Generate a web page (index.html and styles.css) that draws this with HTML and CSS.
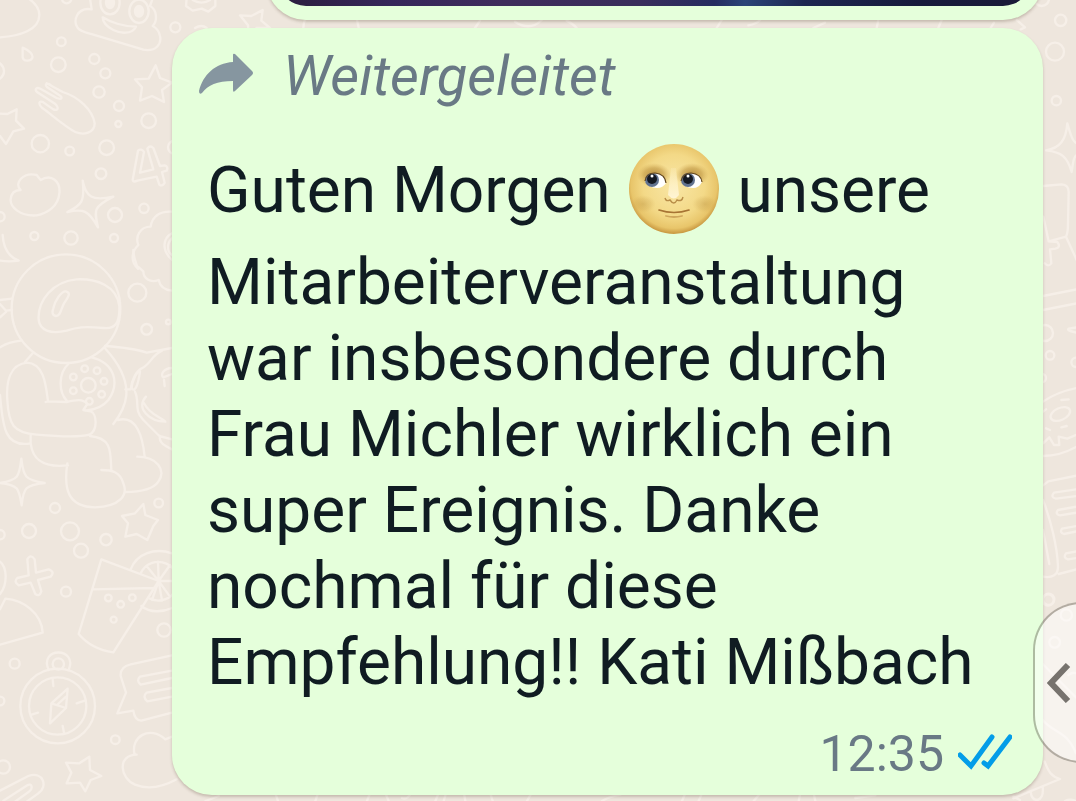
FILE: index.html
```
<!DOCTYPE html>
<html lang="de">
<head>
    <meta charset="UTF-8">
    <meta name="viewport" content="width=device-width, initial-scale=1.0">
    <title>Chat</title>
    <link rel="stylesheet" href="styles.css">
</head>
<body>
    <!-- Wallpaper -->
    <svg class="wallpaper" viewBox="0 0 3228 2403" preserveAspectRatio="xMinYMin slice" aria-hidden="true">
        <g>
            <path d="M0 112C60 108 118 90 118 45C118 20 100 5 85 -5M275 28C230 20 218 65 232 82C240 95 260 98 280 104L430 149C470 156 485 130 480 108C477 92 466 82 458 78C474 62 470 28 450 18L458 -5M275 28L270 -5M308 52C330 66 370 80 408 80C395 105 360 100 340 90C320 80 308 66 308 52Z"/>
            <ellipse cx="330" cy="8" rx="29" ry="35"/><ellipse cx="417" cy="34" rx="29" ry="35"/>
            <ellipse class="fill" cx="330" cy="8" rx="12" ry="16"/><ellipse class="fill" cx="417" cy="34" rx="12" ry="16"/>
            <circle cx="184" cy="125" r="13"/><circle cx="175" cy="194" r="22"/><circle cx="283" cy="177" r="15"/><circle cx="316" cy="220" r="15"/><circle cx="297" cy="276" r="17"/><circle cx="357" cy="318" r="15"/><circle cx="355" cy="372" r="9"/><circle cx="446" cy="362" r="22"/><circle cx="121" cy="431" r="26"/><circle cx="209" cy="453" r="13"/><circle cx="320" cy="443" r="22"/><circle cx="303" cy="521" r="16"/><circle cx="345" cy="645" r="21"/><circle cx="432" cy="625" r="14"/><circle cx="213" cy="714" r="20"/><circle cx="342" cy="714" r="12"/><circle cx="103" cy="708" r="12"/><circle cx="0" cy="650" r="14"/><circle cx="526" cy="82" r="15"/><circle cx="524" cy="442" r="20"/><circle cx="200" cy="-4" r="14"/>
            <path d="M68 143C90 152 100 165 97 174C90 186 70 184 68 172ZM0 190C14 202 18 222 0 236"/>
            <path d="M140 250L188 276C235 290 278 330 284 370C284 400 250 406 226 396C195 380 150 340 128 325C112 310 118 300 130 307L160 328C176 334 176 322 166 312L112 277C100 266 112 260 124 268L170 294C186 300 190 292 176 284L142 262C132 252 140 248 152 255"/>
            <path d="M467 196L480 234L516 248L486 270L492 306L456 288L420 302L426 262L405 238L446 236ZM0 341L22 342L50 328L48 362L72 386L40 394L18 432L0 408"/>
            <path d="M414 452L398 540Q400 548 412 542L470 530L478 554Q488 560 494 548L486 516L500 512Q506 500 494 496L480 498L460 444Q450 434 442 446L460 508L420 518L432 456Q424 444 414 452Z"/>
            <path d="M62 570C40 550 70 515 110 525L122 540C155 520 182 545 178 580C175 620 140 640 110 646C60 650 30 620 32 598C34 576 48 570 62 570ZM248 542C258 590 275 604 340 590C280 620 282 630 294 682C265 630 250 626 202 636C245 615 255 605 248 542ZM8 705C10 745 25 770 56 782C35 785 20 785 0 782"/>
            <path d="M516 635C480 632 456 650 452 680C420 680 405 710 415 735C390 760 395 790 414 806M516 700C488 715 484 750 516 780M516 715C500 730 500 755 516 765"/>
        </g>
        <g transform="translate(0 720)">
            <circle cx="198" cy="206" r="163"/>
            <path d="M116 240C112 180 160 124 230 118C290 116 350 136 358 198C360 250 345 268 310 264C250 258 230 262 200 272C150 284 120 270 116 240ZM160 205C165 180 185 152 198 154C212 158 208 168 192 190C182 208 182 228 168 228C156 226 156 215 160 205ZM0 180L36 176M0 192L18 212L36 210M0 232L18 216M0 322Q25 306 62 302M98 340L75 366"/>
            <path d="M137 486L144 484C138 440 134 370 80 368C30 374 18 425 22 480C26 555 40 578 110 584C180 590 240 592 268 584C295 570 290 520 272 514L250 510L262 492C250 475 225 480 200 486L144 484M0 465C8 550 10 625 92 610L92 584M92 610C98 660 130 684 204 676M202 670C190 750 205 800 285 802C360 800 385 765 370 730C360 695 335 690 304 690M334 690C330 640 340 595 270 588M315 325C420 440 372 510 340 552M354 540C410 525 428 590 434 650M412 650C470 650 500 690 475 725C460 748 420 756 374 756M315 318Q400 324 440 338L516 324M486 332C455 345 450 375 425 385C408 395 395 420 392 448L376 448M205 372C175 400 175 455 200 482M275 352C345 370 360 430 325 480C305 505 280 510 256 512"/>
            <path d="M420 395C410 390 395 430 395 445C406 460 415 430 420 395ZM405 455C420 485 400 510 430 540L478 588L516 598M438 470C405 505 450 545 496 545C480 530 450 525 432 490M480 588C475 610 500 620 516 628M516 384C490 385 480 405 490 412L516 402M494 438L492 420"/>
            <circle cx="265" cy="436" r="22"/><circle cx="254" cy="386" r="10"/><circle cx="291" cy="392" r="10"/><circle cx="312" cy="424" r="10"/><circle cx="305" cy="463" r="10"/><circle cx="268" cy="484" r="10"/><circle cx="220" cy="452" r="10"/><circle cx="220" cy="411" r="10"/><circle cx="412" cy="158" r="27"/><circle cx="440" cy="268" r="16"/><circle cx="505" cy="246" r="7"/><circle cx="165" cy="804" r="15"/><circle cx="476" cy="789" r="13"/>
            <path d="M64 656C70 710 75 720 134 729C75 735 70 745 65 796C57 745 55 735 0 729C55 720 58 710 64 656ZM414 86C404 60 400 35 400 30M414 80L430 94C430 115 450 130 476 120C480 140 495 150 516 152M366 828L405 820L430 792L436 825L474 840L460 858L442 900L410 882L376 890L384 850Z"/>
        </g>
        <g transform="translate(0 1560)">
            <circle cx="0" cy="44" r="14"/><circle cx="87" cy="33" r="21"/><circle cx="210" cy="34" r="27"/><circle cx="243" cy="92" r="21"/><circle cx="318" cy="59" r="17"/><circle cx="198" cy="215" r="15"/><circle cx="325" cy="234" r="10"/><circle cx="397" cy="233" r="10"/><circle cx="362" cy="253" r="10"/><circle cx="341" cy="299" r="9"/><circle cx="44" cy="431" r="15"/><circle cx="492" cy="330" r="20"/><circle cx="0" cy="543" r="13"/><circle cx="346" cy="659" r="13"/><circle cx="10" cy="741" r="20"/>
            <path d="M82 118Q92 100 104 118L108 158L146 148Q166 155 152 170L114 180L124 214Q118 232 106 222L92 188L56 196Q40 186 52 174L86 166ZM0 125C20 140 25 190 0 222M0 268L16 236C70 240 125 280 128 338L0 374M304 118L236 342Q275 388 340 397L476 183ZM280 208L462 204M392 148C410 100 465 82 516 100M424 258C450 280 490 276 516 264"/>
            <path d="M422 160A58 58 0 1 1 450 236M476 183L440 138M476 183L474 125M476 183L510 135M476 183L534 183M476 183L510 230M476 183L486 242M476 183L456 240"/>
            <circle cx="173" cy="558" r="112"/><circle cx="173" cy="558" r="86"/><circle cx="175" cy="432" r="17"/>
            <path d="M146 450C115 380 235 380 206 450M158 476L160 498M230 550L254 542M95 584L114 578M188 618L192 638M203 506L154 550L150 610L198 564ZM154 550L198 564M174 552L198 530"/>
            <path d="M516 406L392 433Q360 440 362 468L378 518L352 580L400 572Q404 602 424 602L516 578M516 452L420 470Q408 482 422 494L516 474M516 504L440 518Q426 530 442 544L516 530M404 704C390 650 450 615 496 658L516 650M410 704C350 705 360 775 405 794C445 810 490 800 530 778M268 710L270 750L304 768L272 780L256 814L240 788L200 790L214 758L198 728L238 730ZM0 812L85 768C130 752 145 800 115 820L80 845M10 842L82 796C95 788 100 805 88 814L45 845"/>
        </g>
        <!-- strip between the bubbles -->
        <g transform="translate(540 0)">
            <path d="M20 -5L18 18L38 32L65 26L85 35L106 18L106 -5M38 0Q65 16 90 0M180 46L214 48L248 30L244 62L270 84L230 84L206 104L204 76ZM370 84Q370 70 376 55M536 84L530 55M885 84L900 62M1005 65Q1050 95 1085 60M1160 62Q1180 72 1190 84M45 84Q65 72 80 84"/>
            <path d="M1610 84L1625 60M1705 76Q1730 72 1740 60M1900 84L1935 68M2090 84L2095 60M2275 84L2285 60"/>
        </g>
        <!-- strip below the message -->
        <g transform="translate(516 2310)">
            <path d="M100 93L140 78M318 93L310 70M430 93L438 70M585 93L592 75M640 70L650 93M690 84Q705 90 715 72M790 93L800 70M815 93L822 70M880 93L876 70M962 93L955 70M1065 93L1078 70M1290 93Q1310 80 1345 74M1530 93L1540 70M1580 93L1590 70M1745 93L1765 70M1880 93L1885 70M1930 93L1925 70M2050 84L2110 76"/>
        </g>
        <g transform="translate(2940 0)">
            <circle cx="185" cy="-4" r="22"/><circle cx="242" cy="61" r="17"/><circle cx="225" cy="155" r="27"/><circle cx="229" cy="302" r="14"/>
            <path d="M110 60L135 82L122 88M32 84L42 68M262 370C258 420 240 445 198 451C245 456 262 470 275 516C280 480 282 470 290 465M262 370C272 405 278 425 290 430M189 558L245 553Q266 555 266 575L264 670Q264 700 258 710L206 724L190 650M258 710L290 780M206 724L232 726Q244 742 226 746L210 748L214 790Q205 802 194 790M189 888L290 868"/>
        </g>
        <g transform="translate(2940 900)">
            <circle cx="195" cy="99" r="24"/><circle cx="210" cy="166" r="13"/><circle cx="288" cy="187" r="14"/><circle cx="186" cy="234" r="12"/><circle cx="206" cy="898" r="17"/><ellipse cx="241" cy="342" rx="31" ry="18" transform="rotate(-24 241 342)"/>
            <path d="M189 30L290 10M290 82L266 86Q258 92 290 98M189 305Q230 276 290 264M244 300L266 298M198 385L210 390M244 382L260 378M189 335L198 328M189 430L208 412L222 435L238 435L236 410L262 416L290 404M189 468Q240 468 290 440M189 556L205 544L290 527M290 568L222 578Q210 592 228 596L290 588M290 620L234 630Q224 642 240 646L290 638M290 678L246 686Q238 698 252 702L290 694M290 754L258 760Q248 774 264 778L290 774M189 600C212 660 232 740 234 800C234 826 215 835 189 830M189 690L208 792M236 822L290 808"/>
        </g>
        <g transform="translate(3000 1740)">
            <circle cx="144" cy="60" r="17"/><circle cx="199" cy="105" r="17"/><circle cx="164" cy="187" r="16"/>
            <path d="M128 252L228 352M128 420C160 460 200 450 228 520M134 545C145 575 155 590 180 597L40 655M92 636Q95 660 112 660Q132 655 128 620M60 660L40 650M195 663Q210 655 228 663M205 285Q220 275 228 280"/>
        </g>
    </svg>

    <main class="chat">
        <div class="bubble media-bubble">
            <div class="media"></div>
        </div>

        <article class="bubble message">
            <div class="forwarded">
                <svg class="forward-icon" viewBox="0 0 54 42" aria-hidden="true">
                    <path d="M34 2Q34 0 36 1L53 18Q55 20 53 22L36 38Q34 40 34 37V28C18 28 9 32 3 40Q0 42 0 38C4 22 16 10 34 9Z"/>
                </svg>
                <span>Weitergeleitet</span>
            </div>
            <p class="text">Guten Morgen <svg class="emoji" viewBox="0 0 90 90" role="img" aria-label="Vollmond mit Gesicht">
                    <defs>
                        <radialGradient id="moon" cx="50%" cy="46%" r="53%">
                            <stop offset="0" stop-color="#f9e6a5"/>
                            <stop offset="0.65" stop-color="#f3d987"/>
                            <stop offset="0.9" stop-color="#e8c56a"/>
                            <stop offset="1" stop-color="#cc9d45"/>
                        </radialGradient>
                        <radialGradient id="socket">
                            <stop offset="0" stop-color="#a87c2c" stop-opacity="0.85"/>
                            <stop offset="0.6" stop-color="#b98d39" stop-opacity="0.5"/>
                            <stop offset="1" stop-color="#d0a750" stop-opacity="0"/>
                        </radialGradient>
                        <linearGradient id="nose" x2="0" y2="1">
                            <stop offset="0" stop-color="#fff5d0" stop-opacity="0.2"/>
                            <stop offset="1" stop-color="#fff5d5"/>
                        </linearGradient>
                    </defs>
                    <circle cx="45" cy="45" r="45" fill="url(#moon)"/>
                    <ellipse cx="25" cy="31" rx="17" ry="12" fill="url(#socket)"/>
                    <ellipse cx="63" cy="31" rx="17" ry="12" fill="url(#socket)"/>
                    <ellipse cx="14" cy="60" rx="13" ry="9" fill="url(#socket)" opacity="0.35"/>
                    <ellipse cx="76" cy="60" rx="13" ry="9" fill="url(#socket)" opacity="0.35"/>
                    <path d="M42 24H47L50 51Q45 58 39 51Z" fill="url(#nose)"/>
                    <path d="M16 37Q17 29 26 29Q36 30 37 39Q34 44 28 44Q19 44 16 37Z" fill="#fff"/>
                    <path d="M52 37Q54 29 62 29Q72 30 73 38Q70 44 64 44Q55 44 52 37Z" fill="#fff"/>
                    <circle cx="23" cy="36" r="7" fill="#61728f"/><circle cx="59" cy="36" r="7" fill="#61728f"/>
                    <circle cx="23" cy="35" r="5" fill="#151922"/><circle cx="59" cy="35" r="5" fill="#151922"/>
                    <circle cx="23" cy="32" r="1.5" fill="#fff"/><circle cx="59" cy="32" r="1.5" fill="#fff"/>
                    <path d="M16 37Q17 29 26 29Q36 30 37 39M52 37Q54 29 62 29Q72 30 73 38" fill="none" stroke="#60451d" stroke-width="1.2"/>
                    <path d="M36 54Q37 58 41 56Q45 62 48 56Q53 58 54 53" fill="none" stroke="#b88d48" stroke-width="1.4"/>
                    <path d="M30 66Q45 71 60 66" fill="none" stroke="#a77434" stroke-width="1.7" stroke-linecap="round"/>
                    <path d="M37 72Q45 74 53 72" fill="none" stroke="#cfa75c" stroke-width="1.8" stroke-linecap="round"/>
                </svg> unsere Mitarbeiterveranstaltung war insbesondere durch Frau Michler wirklich ein super Ereignis. Danke nochmal für diese Empfehlung!! Kati Mißbach</p>
            <div class="meta">
                <time datetime="12:35">12:35</time>
                <svg class="ticks" viewBox="0 0 54 36" role="img" aria-label="Gelesen">
                    <path d="M2 21L13 32L34 3M26 29L30 32L52 3"/>
                </svg>
            </div>
        </article>
    </main>

    <button class="side-handle" type="button" aria-label="Seitenleiste öffnen">
        <svg viewBox="0 0 24 40" aria-hidden="true"><path d="M21 2L4 20L21 38"/></svg>
    </button>
</body>
</html>
```
FILE: styles.css
```
:root {
    --wallpaper: #eee6dd;
    --doodle: #f6efe8;
    --bubble: #e5ffdb;
    --text: #101c22;
    --muted: #697985;
    --blue: #039de8;
}

* {
    box-sizing: border-box;
}

body {
    margin: 0;
    height: 100vh;
    position: relative;
    overflow: hidden;
    background: var(--wallpaper);
    color: var(--text);
    font-family: Roboto, sans-serif;
}

.wallpaper {
    position: absolute;
    inset: 0;
    width: 100%;
    height: 100%;
    fill: none;
    stroke: var(--doodle);
    stroke-width: 7;
    stroke-linecap: round;
    stroke-linejoin: round;
}

.wallpaper .fill {
    fill: var(--doodle);
}

.chat {
    position: relative;
    height: 100%;
    display: flex;
    flex-direction: column;
    justify-content: flex-end;
    gap: 8px;
    padding: 0 33px 6px 172px;
}

.bubble {
    flex: none;
    border-radius: 40px;
    background: var(--bubble);
    box-shadow: 0 2px 3px rgba(80, 60, 40, 0.25);
}

.media-bubble {
    margin-left: 94px;
    padding: 14px 12px;
}

.media {
    height: 400px;
    border-radius: 28px;
    background: linear-gradient(90deg, #2b1d3d, #35265a 15%, #3f2c5c 30%, #3a2d5c 48%, #252c60 58%, #2b4478 62%, #1d2650 70%, #171a3c 85%, #1a1a38);
}

.message {
    padding: 16px 31px 13px 27px;
}

.forwarded {
    display: flex;
    align-items: center;
    gap: 30px;
    color: var(--muted);
    font-size: 56px;
    font-style: italic;
    line-height: 64px;
}

.forward-icon {
    width: 54px;
    height: 42px;
    margin-bottom: 4px;
    fill: #8696a0;
}

.text {
    margin: 36px 0 0;
    padding: 0 8px;
    font-size: 64px;
    line-height: 76px;
}

.emoji {
    width: 90px;
    height: 90px;
    margin: 0 3px 11px 2px;
    vertical-align: -33px;
}

.meta {
    display: flex;
    justify-content: flex-end;
    align-items: center;
    gap: 14px;
    margin-top: 25px;
    color: var(--muted);
    font-size: 50px;
    line-height: 56px;
}

.ticks {
    width: 54px;
    height: 36px;
    margin-bottom: 4px;
    fill: none;
    stroke: var(--blue);
    stroke-width: 5;
    stroke-linecap: round;
}

.side-handle {
    position: absolute;
    right: -40px;
    bottom: 38px;
    width: 83px;
    height: 161px;
    padding: 0 0 0 12px;
    border: 2px solid rgba(90, 85, 75, 0.4);
    border-radius: 48px 0 0 48px;
    background: rgba(255, 255, 255, 0.5);
    background-clip: padding-box;
    text-align: left;
    cursor: pointer;
}

.side-handle svg {
    display: block;
    width: 24px;
    height: 40px;
    fill: none;
    stroke: #77736e;
    stroke-width: 6;
}
```
